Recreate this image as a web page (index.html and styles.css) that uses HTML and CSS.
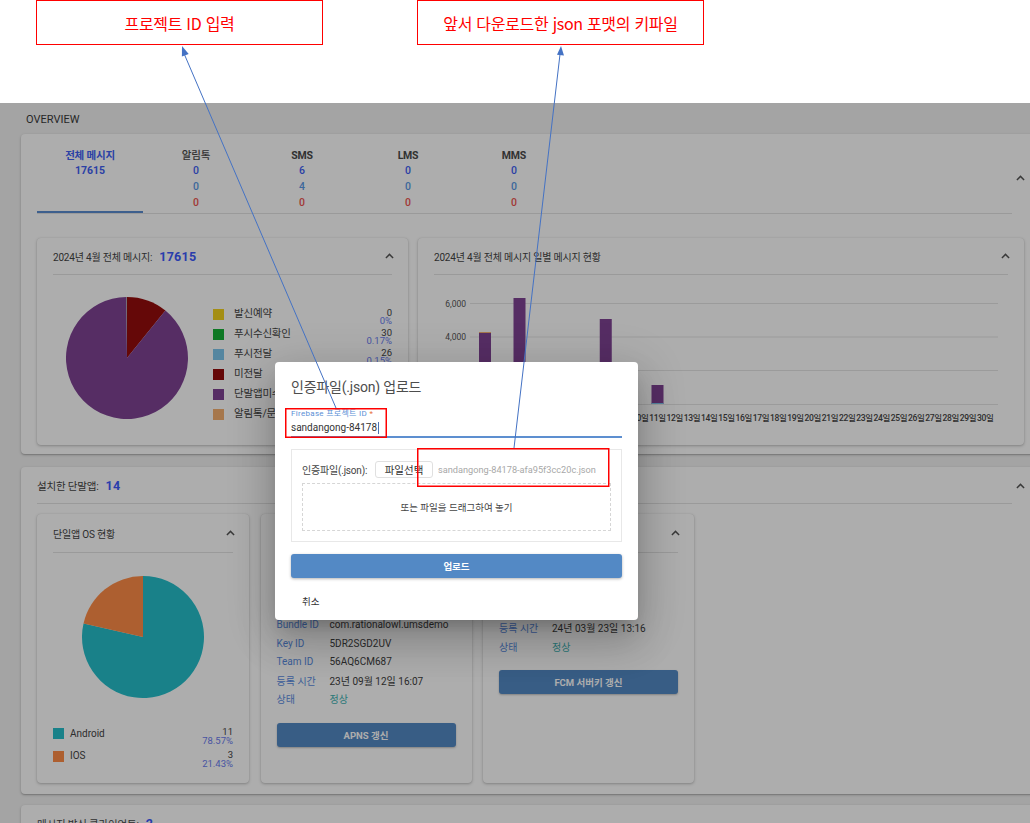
FILE: index.html
```html
<!DOCTYPE html>
<html lang="ko">
<head>
<meta charset="utf-8">
<title>인증파일 업로드</title>
<link rel="stylesheet" href="styles.css">
</head>
<body>
<div class="annot-top">
  <div class="note">프로젝트 ID 입력</div>
  <div class="note">앞서 다운로드한 json 포맷의 키파일</div>
</div>

<div class="app">
  <div class="sec-label">OVERVIEW</div>

  <section class="card overview">
    <div class="ov-head">
      <div class="tabs">
        <div class="tab active">
          <div class="tab-name">전체 메시지</div>
          <div class="v v1 strong">17615</div>
        </div>
        <div class="tab">
          <div class="tab-name light">알림톡</div>
          <div class="v v1">0</div><div class="v v2">0</div><div class="v v3">0</div>
        </div>
        <div class="tab">
          <div class="tab-name">SMS</div>
          <div class="v v1">6</div><div class="v v2">4</div><div class="v v3">0</div>
        </div>
        <div class="tab">
          <div class="tab-name">LMS</div>
          <div class="v v1">0</div><div class="v v2">0</div><div class="v v3">0</div>
        </div>
        <div class="tab">
          <div class="tab-name">MMS</div>
          <div class="v v1">0</div><div class="v v2">0</div><div class="v v3">0</div>
        </div>
      </div>
      <div class="chev-col chev-ov">
        <svg class="chev" viewBox="0 0 10 6" width="9" height="6"><path d="M1 5.2 L5 1.2 L9 5.2" fill="none" stroke="#555" stroke-width="1.6"/></svg>
      </div>
    </div>

    <div class="charts">
      <div class="sub-card chart-total">
        <div class="sc-head">
          <div class="sc-title">2024년 4월 전체 메시지: <span class="big-num">17615</span></div>
          <svg class="chev" viewBox="0 0 10 6" width="9" height="6"><path d="M1 5.2 L5 1.2 L9 5.2" fill="none" stroke="#555" stroke-width="1.6"/></svg>
        </div>
        <div class="pie-body">
          <svg class="pie" viewBox="0 0 122 122" width="122" height="122">
            <path d="M61 61 L61 0 A61 61 0 0 1 99.39 13.60 Z" fill="#950c0c"/>
            <path d="M61 61 L99.39 13.60 A61 61 0 1 1 60.36 0.003 Z" fill="#7f4394"/>
            <path d="M61 61 L60.36 0.003 A61 61 0 0 1 61 0 Z" fill="#9a9a9a"/>
          </svg>
          <div class="legend">
            <div class="lg-row"><span class="sw" style="background:#f2d11e"></span><span class="lg-name">발신예약</span><span class="lg-val"><span class="cnt">0</span><span class="pct">0%</span></span></div>
            <div class="lg-row"><span class="sw" style="background:#16b136"></span><span class="lg-name">푸시수신확인</span><span class="lg-val"><span class="cnt">30</span><span class="pct">0.17%</span></span></div>
            <div class="lg-row"><span class="sw" style="background:#7ec6ec"></span><span class="lg-name">푸시전달</span><span class="lg-val"><span class="cnt">26</span><span class="pct">0.15%</span></span></div>
            <div class="lg-row"><span class="sw" style="background:#950c0c"></span><span class="lg-name">미전달</span><span class="lg-val"><span class="cnt">1823</span><span class="pct">10.35%</span></span></div>
            <div class="lg-row"><span class="sw" style="background:#7f4394"></span><span class="lg-name">단말앱미수신</span><span class="lg-val"><span class="cnt">15736</span><span class="pct">89.33%</span></span></div>
            <div class="lg-row"><span class="sw" style="background:#f5b070"></span><span class="lg-name">알림톡/문자 전환</span><span class="lg-val"><span class="cnt">0</span><span class="pct">0%</span></span></div>
          </div>
        </div>
      </div>

      <div class="sub-card chart-daily">
        <div class="sc-head">
          <div class="sc-title">2024년 4월 전체 메시지 일별 메시지 현황</div>
          <svg class="chev" viewBox="0 0 10 6" width="9" height="6"><path d="M1 5.2 L5 1.2 L9 5.2" fill="none" stroke="#555" stroke-width="1.6"/></svg>
        </div>
        <svg class="bars" viewBox="0 0 574 160" width="574" height="160">
          <g stroke="#e5e5e5" stroke-width="1">
            <line x1="36" y1="28.5" x2="564" y2="28.5"/>
            <line x1="36" y1="62" x2="564" y2="62"/>
            <line x1="36" y1="95.5" x2="564" y2="95.5"/>
            <line x1="36" y1="129.5" x2="564" y2="129.5"/>
          </g>
          <g class="ylab" text-anchor="end">
            <text x="32" y="31.5">6,000</text>
            <text x="32" y="65">4,000</text>
            <text x="32" y="98.5">2,000</text>
            <text x="32" y="132.5">0</text>
          </g>
          <rect x="45" y="58" width="12" height="71" fill="#7f4394"/>
          <rect x="45" y="57" width="12" height="1" fill="#f5b070"/>
          <rect x="79.5" y="23" width="12" height="106" fill="#7f4394"/>
          <rect x="165.75" y="44" width="12" height="85" fill="#7f4394"/>
          <rect x="217.5" y="110" width="12" height="19" fill="#7f4394"/>
          <rect x="217.5" y="128" width="12" height="1" fill="#7ec6ec"/>
          <g class="xlab" text-anchor="middle">
            <text x="51">1일</text><text x="68.25">2일</text><text x="85.5">3일</text><text x="102.75">4일</text><text x="120">5일</text>
            <text x="137.25">6일</text><text x="154.5">7일</text><text x="171.75">8일</text><text x="189">9일</text><text x="206.25">10일</text>
            <text x="223.5">11일</text><text x="240.75">12일</text><text x="258">13일</text><text x="275.25">14일</text><text x="292.5">15일</text>
            <text x="309.75">16일</text><text x="327">17일</text><text x="344.25">18일</text><text x="361.5">19일</text><text x="378.75">20일</text>
            <text x="396">21일</text><text x="413.25">22일</text><text x="430.5">23일</text><text x="447.75">24일</text><text x="465">25일</text>
            <text x="482.25">26일</text><text x="499.5">27일</text><text x="516.75">28일</text><text x="534">29일</text><text x="551.25">30일</text>
          </g>
        </svg>
      </div>
    </div>
  </section>

  <section class="card installed">
    <div class="inst-head">
      <div class="inst-title">설치한 단말앱: <span class="big-num">14</span></div>
      <div class="chev-col">
        <svg class="chev" viewBox="0 0 10 6" width="9" height="6"><path d="M1 5.2 L5 1.2 L9 5.2" fill="none" stroke="#555" stroke-width="1.6"/></svg>
      </div>
    </div>
    <div class="apps">
      <div class="sub-card app-card os-card">
        <div class="sc-head tall">
          <div class="sc-title">단일앱 OS 현황</div>
          <svg class="chev" viewBox="0 0 10 6" width="9" height="6"><path d="M1 5.2 L5 1.2 L9 5.2" fill="none" stroke="#555" stroke-width="1.6"/></svg>
        </div>
        <svg class="os-pie" viewBox="0 0 122 122" width="122" height="122">
          <path d="M61 61 L61 0 A61 61 0 1 1 1.53 47.42 Z" fill="#25bfcb"/>
          <path d="M61 61 L1.53 47.42 A61 61 0 0 1 61 0 Z" fill="#ff8d47"/>
        </svg>
        <div class="os-legend">
          <div class="os-row"><span class="sw" style="background:#25bfcb"></span><span class="lg-name">Android</span><span class="lg-val"><span class="cnt">11</span><span class="pct">78.57%</span></span></div>
          <div class="os-row"><span class="sw" style="background:#ff8d47"></span><span class="lg-name">IOS</span><span class="lg-val"><span class="cnt">3</span><span class="pct">21.43%</span></span></div>
        </div>
      </div>

      <div class="sub-card app-card">
        <div class="sc-head tall">
          <div class="sc-title">iOS 인증서 (APNS)</div>
          <svg class="chev" viewBox="0 0 10 6" width="9" height="6"><path d="M1 5.2 L5 1.2 L9 5.2" fill="none" stroke="#555" stroke-width="1.6"/></svg>
        </div>
        <div class="info apns">
          <div class="info-row"><span class="k">앱 이름</span><span class="val">UMS Demo</span></div>
          <div class="info-row"><span class="k">OS</span><span class="val">iOS</span></div>
          <div class="info-row"><span class="k">인증 방식</span><span class="val">p8 인증키</span></div>
          <div class="info-row"><span class="k">Bundle ID</span><span class="val">com.rationalowl.umsdemo</span></div>
          <div class="info-row"><span class="k">Key ID</span><span class="val">5DR2SGD2UV</span></div>
          <div class="info-row"><span class="k">Team ID</span><span class="val">56AQ6CM687</span></div>
          <div class="info-row"><span class="k">등록 시간</span><span class="val">23년 09월 12일 16:07</span></div>
          <div class="info-row"><span class="k">상태</span><span class="val ok">정상</span></div>
          <div class="btn-primary">APNS 갱신</div>
        </div>
      </div>

      <div class="sub-card app-card">
        <div class="sc-head tall">
          <div class="sc-title">Android 인증 (FCM)</div>
          <svg class="chev" viewBox="0 0 10 6" width="9" height="6"><path d="M1 5.2 L5 1.2 L9 5.2" fill="none" stroke="#555" stroke-width="1.6"/></svg>
        </div>
        <div class="info fcm">
          <div class="info-row"><span class="k">앱 이름</span><span class="val">UMS Demo</span></div>
          <div class="info-row"><span class="k">OS</span><span class="val">Android</span></div>
          <div class="info-row"><span class="k">프로젝트</span><span class="val">sandangong-84178</span></div>
          <div class="info-row"><span class="k">등록 시간</span><span class="val">24년 03월 23일 13:16</span></div>
          <div class="info-row"><span class="k">상태</span><span class="val ok">정상</span></div>
          <div class="btn-primary">FCM 서버키 갱신</div>
        </div>
      </div>
    </div>
  </section>

  <section class="card clients">
    <div class="inst-head">
      <div class="inst-title">메시지 발신 클라이언트: <span class="big-num">2</span></div>
    </div>
  </section>
</div>

<div class="backdrop"></div>

<div class="dialog">
  <div class="dlg-title">인증파일(.json) 업로드</div>
  <div class="field">
    <div class="field-label">Firebase 프로젝트 ID <span class="req">*</span></div>
    <div class="field-input">sandangong-84178<span class="caret"></span></div>
  </div>
  <div class="file-box">
    <div class="file-row">
      <span class="file-label">인증파일(.json):</span>
      <span class="file-btn">파일선택</span>
      <span class="file-name">sandangong-84178-afa95f3cc20c.json</span>
    </div>
    <div class="drop">또는 파일을 드래그하여 놓기</div>
  </div>
  <div class="upload">업로드</div>
  <div class="dlg-actions"><span class="cancel">취소</span></div>
</div>

<svg class="annot-layer" viewBox="0 0 1030 823" width="1030" height="823">
  <g stroke="#4472c4" stroke-width="1" fill="none">
    <line x1="182.5" y1="50" x2="336" y2="408"/>
    <line x1="560.5" y1="50" x2="514" y2="448"/>
  </g>
  <g fill="#4472c4">
    <polygon points="182,46 188.7,54 181.9,56.6"/>
    <polygon points="561,46 564,55.5 557,54.7"/>
  </g>
  <g fill="none" stroke="#ff0000" stroke-width="1.5">
    <rect x="285.75" y="408.75" width="100.5" height="28.5"/>
    <rect x="417.75" y="448.75" width="191" height="37.5"/>
  </g>
</svg>
</body>
</html>
```

FILE: styles.css
```css
* { box-sizing: border-box; }
html, body { margin: 0; padding: 0; }
body {
  width: 1030px;
  height: 823px;
  overflow: hidden;
  position: relative;
  background: #fff;
  font-family: Roboto, "Noto Sans CJK KR", sans-serif;
  color: #424242;
}

/* annotation header */
.annot-top {
  height: 103px;
  display: flex;
  gap: 94px;
  padding-left: 36px;
}
.note {
  width: 287px;
  height: 45px;
  border: 1.5px solid #ff0000;
  display: flex;
  align-items: center;
  justify-content: center;
  color: #ff0000;
  font-family: "Noto Sans CJK KR", sans-serif;
  font-size: 16px;
  line-height: 20px;
  letter-spacing: -0.3px;
}

/* app */
.app {
  height: 720px;
  background: #f2f2f2;
  padding-left: 21px;
  overflow: hidden;
}
.sec-label {
  height: 31px;
  padding: 10px 0 0 5px;
  font-size: 11px;
  line-height: 14px;
  color: #3a3a3a;
}
.card {
  width: 1019px;
  background: #fff;
  border-radius: 4px;
  box-shadow: 0 1px 3px rgba(0,0,0,.22), 0 1px 1px rgba(0,0,0,.12);
  padding: 0 16px;
}
.chev { display: block; }

/* overview tabs */
.ov-head { display: flex; }
.tabs {
  flex: 1;
  display: flex;
  border-bottom: 1px solid #e3e3e3;
}
.tab {
  width: 106px;
  text-align: center;
  padding-top: 14px;
  border-bottom: 2px solid transparent;
}
.tab.active { border-bottom-color: #5a8dd0; }
.tab-name {
  font-size: 10.5px;
  font-weight: 700;
  line-height: 15px;
  color: #4a4a4a;
  letter-spacing: -0.2px;
}
.tab-name.light { font-weight: 500; }
.tab.active .tab-name { color: #4060f4; }
.v {
  font-size: 10.5px;
  font-weight: 500;
  line-height: 16px;
}
.v1 { color: #4060f4; }
.v2 { color: #5a9ae6; }
.v3 { color: #ee5450; }
.v.strong { font-weight: 700; }
.chev-col {
  width: 16px;
  margin-right: -4px;
  display: flex;
  align-items: center;
  justify-content: center;
}
.chev-ov { padding-top: 8px; }

/* charts row */
.charts {
  display: flex;
  gap: 10px;
  margin-top: 24px;
  padding-bottom: 9px;
}
.sub-card {
  background: #fff;
  border-radius: 4px;
  box-shadow: 0 1px 3px rgba(0,0,0,.25), 0 0 1px rgba(0,0,0,.12);
  padding: 0 16px;
}
.chart-total { width: 371px; height: 207px; }
.chart-daily { flex: 1; height: 207px; }
.sc-head {
  height: 37px;
  border-bottom: 1px solid #e3e3e3;
  display: flex;
  align-items: center;
  justify-content: space-between;
}
.sc-head .chev { margin-right: -2px; }
.sc-head.tall { height: 39px; }
.sc-title {
  font-size: 10px;
  color: #444;
  letter-spacing: -0.2px;
  display: flex;
  align-items: center;
  white-space: nowrap;
}
.big-num {
  margin-left: 7px;
  font-size: 12.5px;
  font-weight: 700;
  color: #3d5afe;
  letter-spacing: 0.3px;
}

.pie-body { display: flex; align-items: flex-start; }
.pie { margin: 22px 0 0 13px; flex: none; }
.legend { flex: 1; margin: 28.5px 0 0 25px; }
.lg-row {
  display: flex;
  align-items: flex-start;
  height: 20px;
}
.sw { width: 11px; height: 11px; flex: none; margin-top: 5px; }
.lg-name {
  flex: 1;
  margin-left: 10px;
  font-size: 10.5px;
  line-height: 20px;
  color: #444;
  white-space: nowrap;
  letter-spacing: -0.2px;
}
.lg-val {
  display: flex;
  flex-direction: column;
  align-items: flex-end;
  margin-top: 5px;
  font-size: 9.5px;
  line-height: 8.5px;
}
.cnt { color: #444; }
.pct { color: #6a7cf0; }

.bars { display: block; margin-top: 0; }
.ylab text { font-size: 8.5px; fill: #555; font-family: Roboto, sans-serif; }
.xlab text {
  font-size: 8.5px;
  fill: #444;
  font-weight: 500;
  font-family: Roboto, "Noto Sans CJK KR", sans-serif;
  letter-spacing: -0.4px;
}
.xlab text { transform: translateY(146px); }

/* installed apps */
.installed { margin-top: 13px; padding-bottom: 11px; }
.inst-head { display: flex; }
.inst-title {
  flex: 1;
  height: 37px;
  border-bottom: 1px solid #e3e3e3;
  display: flex;
  align-items: center;
  font-size: 10.5px;
  color: #444;
  letter-spacing: -0.2px;
}
.apps {
  display: flex;
  gap: 11.5px;
  margin-top: 10px;
}
.app-card { width: 211px; height: 269px; }
.os-card { width: 212px; }
.os-pie { display: block; margin: 23px auto 0; }
.os-legend { margin-top: 24.75px; }
.os-row {
  display: flex;
  align-items: flex-start;
  height: 22.5px;
}
.os-row .sw { margin-top: 5.25px; }
.os-row .lg-name { margin-left: 6px; line-height: 22.5px; font-size: 10px; letter-spacing: 0; }
.os-row .lg-val { margin-top: 4.5px; line-height: 9px; }

.info { font-size: 10px; }
.info.apns { padding-top: 7px; }
.info.fcm { padding-top: 10px; }
.info-row {
  display: flex;
  align-items: center;
  height: 18.5px;
  white-space: nowrap;
}
.info-row .k { width: 53px; flex: none; color: #5a8ce1; }
.info-row .val { color: #3e3e3e; }
.info-row .val.ok { color: #3fb3b3; }
.btn-primary {
  margin-top: 14.75px;
  height: 24px;
  border-radius: 3px;
  background: #5389c5;
  color: #fff;
  font-size: 9.5px;
  font-weight: 700;
  display: flex;
  align-items: center;
  justify-content: center;
  box-shadow: 0 1px 2px rgba(0,0,0,.25);
}

.clients { margin-top: 11px; height: 60px; }

/* overlay */
.backdrop {
  position: absolute;
  left: 0;
  top: 103px;
  width: 1030px;
  height: 720px;
  background: rgba(0,0,0,.32);
}
.dialog {
  position: absolute;
  left: 275px;
  top: 362px;
  width: 363px;
  height: 258px;
  background: #fff;
  border-radius: 4px;
  padding: 15px 16px 0;
  box-shadow: 0 11px 15px -7px rgba(0,0,0,.2), 0 24px 38px 3px rgba(0,0,0,.14), 0 9px 46px 8px rgba(0,0,0,.12);
}
.dlg-title {
  font-size: 14px;
  line-height: 20px;
  color: #4d4d4d;
  letter-spacing: -0.2px;
}
.field { margin-top: 12px; }
.field-label {
  font-size: 8px;
  line-height: 10px;
  color: #5b8fd6;
  letter-spacing: 0.3px;
}
.req { color: #e8703a; }
.field-input {
  height: 19px;
  padding-top: 2px;
  font-size: 10px;
  line-height: 14px;
  color: #333;
  border-bottom: 2px solid #5d8fd0;
  display: flex;
  align-items: flex-start;
}
.caret {
  width: 1px;
  height: 12px;
  margin: 1px 0 0 1px;
  background: #4a6fb0;
}
.file-box {
  margin-top: 11px;
  border: 1px solid #e8e8e8;
  padding: 11px 10px 10px;
}
.file-row {
  display: flex;
  align-items: center;
  height: 17px;
  white-space: nowrap;
}
.file-label { width: 73px; font-size: 10px; color: #444; letter-spacing: -0.2px; }
.file-btn {
  width: 58px;
  height: 17px;
  border: 1px solid #e0e0e0;
  border-radius: 3px;
  display: flex;
  align-items: center;
  justify-content: center;
  font-size: 10.5px;
  color: #333;
}
.file-name { margin-left: 5px; font-size: 9.2px; color: #a8a8a8; }
.drop {
  margin-top: 5px;
  height: 48px;
  border: 1px dashed #d6d6d6;
  display: flex;
  align-items: center;
  justify-content: center;
  font-size: 9.5px;
  color: #444;
}
.upload {
  margin-top: 12px;
  height: 24px;
  border-radius: 3px;
  background: #5389c5;
  color: #fff;
  font-size: 9.5px;
  font-weight: 700;
  display: flex;
  align-items: center;
  justify-content: center;
  box-shadow: 0 1px 3px rgba(0,0,0,.3);
}
.dlg-actions {
  margin-top: 16px;
  padding-left: 11px;
  font-size: 9.5px;
  line-height: 16px;
  color: #333;
}

.annot-layer {
  position: absolute;
  left: 0;
  top: 0;
  pointer-events: none;
}
```
